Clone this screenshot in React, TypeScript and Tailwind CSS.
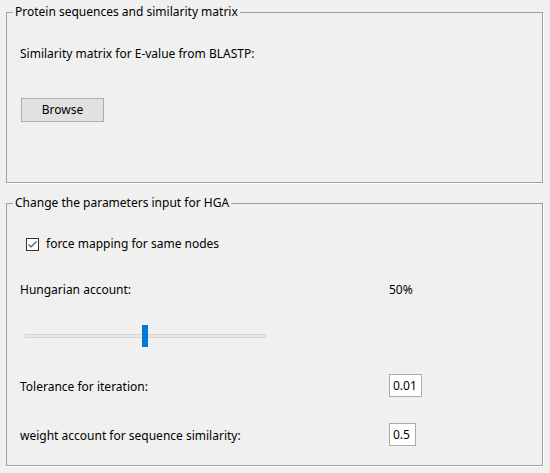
import React from "react";

function GroupBox({
  title,
  className,
  children,
}: {
  title: string;
  className: string;
  children: React.ReactNode;
}) {
  return (
    <div
      className={`relative w-[537px] border border-[#a0a0a0] shadow-[1px_1px_0_#ffffff] ${className}`}
    >
      <span className="absolute left-[6px] -top-[9px] bg-[#f0f0f0] px-[2px] leading-4 whitespace-nowrap">
        {title}
      </span>
      {children}
    </div>
  );
}

export default function App() {
  return (
    <div
      className="w-[550px] h-[473px] bg-[#f0f0f0] pl-[6px] pt-[12px] text-[12px] text-[#000000]"
      style={{ fontFamily: '"Noto Sans", "Liberation Sans", sans-serif' }}
    >
      <GroupBox title="Protein sequences and similarity matrix" className="h-[171px] pl-[13px] pt-[33px]">
        <div className="leading-4 whitespace-nowrap">Similarity matrix for E-value from BLASTP:</div>
        <button className="mt-[36px] ml-[1px] flex h-[24px] w-[83px] items-center justify-center border border-[#adadad] bg-[#e1e1e1] leading-4">
          Browse
        </button>
      </GroupBox>

      <GroupBox title="Change the parameters input for HGA" className="mt-[20px] h-[263px] pl-[13px]">
        <div className="mt-[32px] ml-[6px] flex h-[16px] items-center">
          <div className="flex h-[13px] w-[13px] items-center justify-center border border-[#333333] bg-[#ffffff]">
            <svg width="11" height="11" viewBox="0 0 11 11">
              <path d="M1.5 5.5 L4 8 L9.5 2.5" fill="none" stroke="#555555" strokeWidth="1.2" />
            </svg>
          </div>
          <span className="ml-[7px] leading-4 whitespace-nowrap">force mapping for same nodes</span>
        </div>

        <div className="mt-[30px] flex h-[16px] items-center leading-4">
          <span className="w-[369px] whitespace-nowrap">Hungarian account:</span>
          <span>50%</span>
        </div>

        <div className="mt-[27px] ml-[5px] flex h-[22px] w-[241px] items-center">
          <div className="relative h-[4px] w-full border border-[#d6d6d6] bg-[#e7e7e7]">
            <div className="absolute left-[116px] -top-[10px] h-[22px] w-[6px] bg-[#0078d7]" />
          </div>
        </div>

        <div className="mt-[27px] flex h-[23px] items-center leading-4">
          <span className="w-[369px] whitespace-nowrap pt-[3px]">Tolerance for iteration:</span>
          <div className="flex h-[23px] w-[33px] items-center border border-[#ababab] bg-[#ffffff] pl-[3px]">0.01</div>
        </div>

        <div className="mt-[26px] flex h-[23px] items-center leading-4">
          <span className="w-[369px] whitespace-nowrap pt-[2px]">weight account for sequence similarity:</span>
          <div className="flex h-[23px] w-[27px] items-center border border-[#ababab] bg-[#ffffff] pl-[3px]">0.5</div>
        </div>
      </GroupBox>
    </div>
  );
}
